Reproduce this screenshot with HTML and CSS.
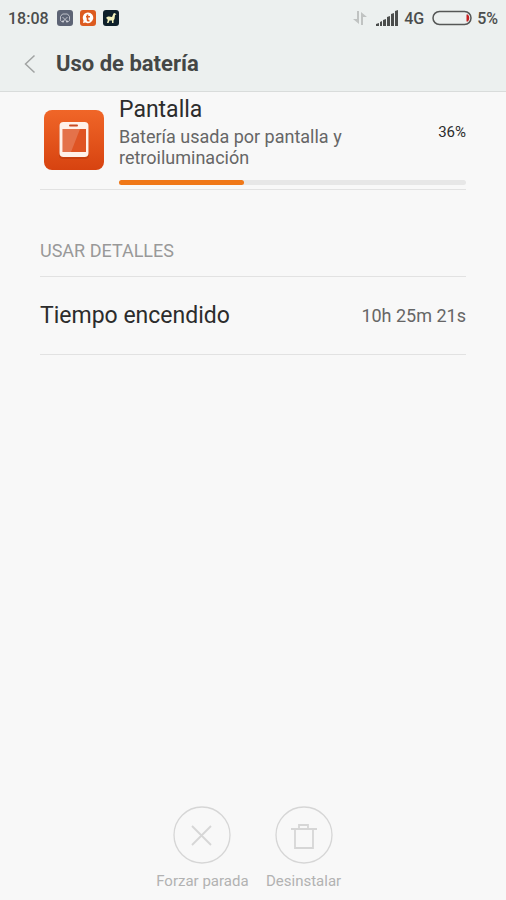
FILE: index.html
```html
<!DOCTYPE html>
<html lang="es">
<head>
<meta charset="utf-8">
<meta name="viewport" content="width=device-width, initial-scale=1">
<title>Uso de batería</title>
<link rel="stylesheet" href="styles.css">
</head>
<body>
<header class="top">
  <div class="status">
    <span>18:08</span>
    <div class="notices">
      <svg width="16" height="16" viewBox="0 0 16 16"><rect width="16" height="16" rx="3" fill="#5d6475"/><path d="M5.500 11.500H4.500A2 2 0 0 1 3.500 9.500V6.500L5.500 4H10.500L12.500 6.500V9.500A2 2 0 0 1 11.500 11.500H10.500M5.500 7L9.500 11M10.500 7L6.500 11" fill="none" stroke="#d5d7dd" stroke-width=".8"/><circle cx="6" cy="11.500" r="1" fill="#d5d7dd"/><circle cx="10" cy="11.500" r="1" fill="#d5d7dd"/></svg>
      <svg width="16" height="16" viewBox="0 0 16 16"><rect width="16" height="16" rx="3" fill="#dc5b20"/><path d="M8 2.500a5.300 5.300 0 1 1-2.500 10L3 13l.5-2.500A5.300 5.300 0 0 1 8 2.500" fill="#fff"/><path d="M7.500 4.500V10Q7.500 11 9.500 10.500M6 6.700H10" fill="none" stroke="#dc5b20" stroke-width="1.600"/></svg>
      <svg width="16" height="16" viewBox="0 0 16 16"><rect width="16" height="16" rx="3" fill="#0e202b"/><path d="M3 8Q4 6 6 6.500L9 7L10.500 3.500L11.500 3L13.500 4.300L12 5L11.500 9L10.500 10.500V13H9V10.500H6.500L5.500 13H4L4.800 10L4 8.800Z" fill="#f1f1bd"/></svg>
    </div>
    <svg class="arrows" width="16" height="16" viewBox="0 0 16 16" fill="#c0c3c2"><path d="M5 1H7V14L1 9H5ZM9 15V2L15 7H11V15Z"/></svg>
    <svg class="signal" width="22" height="16" viewBox="0 0 22 16" fill="#4b4d4c"><path d="M0 14l3-1v3H0zM4 12l2-1v5H4zM7 10l3-1v7H7zM11 7l3-1v10h-3zM15 4l3-1v13h-3zM19 1l3-1v16h-3z"/></svg>
    <span class="network">4G</span>
    <svg class="battery" width="40" height="16" viewBox="0 0 40 16"><rect x="1" y="1.500" width="38" height="13" rx="6.500" fill="none" stroke="#555756" stroke-width="1.500"/><path d="M34.500 4.500H36Q38.500 8 36 11.500H34.500Z" fill="#c51f20"/></svg>
    <span>5%</span>
  </div>
  <div class="title-bar">
    <button class="back" aria-label="Atrás"><svg width="12" height="20" viewBox="0 0 12 20"><path d="M10.500 1.500L1.500 10L10.500 18.500" fill="none" stroke="#a0a3a2" stroke-width="1.500"/></svg></button>
    <h1>Uso de batería</h1>
  </div>
</header>
<main>
  <section class="usage">
    <svg class="app-icon" width="60" height="60" viewBox="0 0 60 60">
      <defs><linearGradient id="orange" x2="0" y2="1"><stop stop-color="#f06628"/><stop offset="1" stop-color="#d74310"/></linearGradient></defs>
      <rect width="60" height="60" rx="8" fill="url(#orange)"/>
      <rect x="15" y="14" width="30" height="35" rx="4" fill="#a93308" opacity=".4"/>
      <rect x="15.500" y="12" width="29" height="35" rx="4" fill="#fff1e9"/>
      <rect x="25" y="14.500" width="9" height="2" rx="1" fill="#ca4b21"/>
      <rect x="18.500" y="19" width="23.500" height="23" fill="#df5423"/>
      <path d="M18.500 19H36L27 42H18.500Z" fill="#fff" opacity=".18"/>
    </svg>
    <div class="usage-body">
      <div class="usage-row">
        <div><h2>Pantalla</h2><p>Batería usada por pantalla y retroiluminación</p></div>
        <span class="percent">36%</span>
      </div>
      <div class="track"><div class="fill"></div></div>
    </div>
  </section>
  <h3>USAR DETALLES</h3>
  <dl class="detail"><dt>Tiempo encendido</dt><dd>10h 25m 21s</dd></dl>
</main>
<footer>
  <button class="action" disabled>
    <svg width="58" height="58" viewBox="0 0 58 58" fill="none" stroke="#d6d6d6"><circle cx="29" cy="29" r="28" stroke-width="1.300"/><path d="M19 20L38 39M38 20L19 39" stroke-width="1.800"/></svg>
    <span>Forzar parada</span>
  </button>
  <button class="action" disabled>
    <svg width="58" height="58" viewBox="0 0 58 58" fill="none" stroke="#d6d6d6"><circle cx="29" cy="29" r="28" stroke-width="1.300"/><path d="M16 23H42M20 23V42H38V23M24 23V19H33V23" stroke-width="1.800"/></svg>
    <span>Desinstalar</span>
  </button>
</footer>
</body>
</html>
```
FILE: styles.css
```css
* { box-sizing: border-box; }
body {
  margin: 0;
  min-height: 100vh;
  display: flex;
  flex-direction: column;
  background: #f8f8f8;
  color: #2c2c2c;
  font-family: Roboto, "Liberation Sans", sans-serif;
}
h1, h2, h3, p, dl, dd { margin: 0; }
svg { display: block; flex: none; }
button { padding: 0; border: 0; background: none; font: inherit; }
.top { background: #ecf0ef; border-bottom: 1px solid #d9dcdb; }
.status {
  display: flex;
  align-items: center;
  height: 36px;
  padding: 0 8px;
  color: #4b4d4c;
  font-size: 16px;
  font-weight: 500;
}
.notices { display: flex; gap: 7px; margin: 0 auto 0 8px; }
.arrows { margin-right: 8px; }
.signal { margin-right: 6px; }
.battery { margin: 0 5px 0 8px; }
.title-bar {
  display: flex;
  align-items: center;
  gap: 20px;
  height: 55px;
  padding-left: 24px;
}
h1 { color: #444746; font-size: 22px; line-height: 28px; font-weight: 700; }
main { flex: 1; padding: 0 40px; }
.usage {
  display: flex;
  align-items: flex-start;
  gap: 15px;
  padding: 4px 0 4px 4px;
  border-bottom: 1px solid #e2e2e2;
}
.app-icon { margin-top: 14px; }
.usage-body { flex: 1; }
.usage-row { display: flex; align-items: center; justify-content: space-between; }
h2 { font-size: 23px; line-height: 28px; font-weight: 400; }
p { max-width: 250px; padding-top: 2px; color: #666; font-size: 18px; line-height: 21px; }
.percent { font-size: 15px; }
.track { height: 5px; margin-top: 12px; border-radius: 3px; background: #e7e7e7; }
.fill { width: 36%; height: 100%; border-radius: 3px; background: #f07818; }
h3 {
  padding: 50px 0 14px;
  border-bottom: 1px solid #e2e2e2;
  color: #999;
  font-size: 18px;
  line-height: 22px;
  font-weight: 400;
}
.detail {
  display: flex;
  align-items: center;
  justify-content: space-between;
  height: 78px;
  border-bottom: 1px solid #e2e2e2;
}
dt { font-size: 23px; }
dd { color: #666; font-size: 18px; }
footer { display: flex; justify-content: center; padding-bottom: 9px; }
.action {
  display: flex;
  flex-direction: column;
  align-items: center;
  gap: 7px;
  width: 20%;
  color: #b2b2b2;
  font-size: 15px;
  line-height: 20px;
}
```
